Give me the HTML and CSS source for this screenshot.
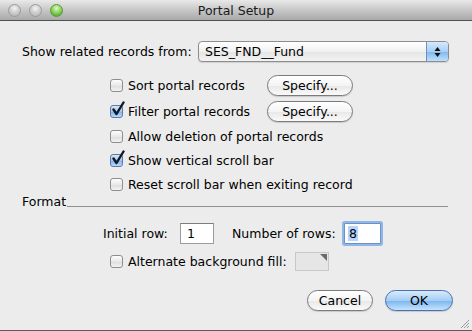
FILE: index.html
```html
<!DOCTYPE html>
<html lang="en">
<head>
    <meta charset="UTF-8">
    <meta name="viewport" content="width=device-width, initial-scale=1.0">
    <title>Portal Setup</title>
    <link rel="stylesheet" href="styles.css">
</head>
<body>
    <div class="window">
        <div class="titlebar">
            <div class="lights">
                <span class="light"></span>
                <span class="light"></span>
                <span class="light green"></span>
            </div>
            <div class="title">Portal Setup</div>
        </div>

        <div class="content">
            <div class="from-row">
                <span class="from-label">Show related records from:</span>
                <div class="select">
                    <span class="select-text">SES_FND__Fund</span>
                    <span class="stepper">
                        <svg width="7" height="12" viewBox="0 0 7 12">
                            <path d="M3.5 1 L6.5 5 L0.5 5 Z" fill="#111"/>
                            <path d="M3.5 11 L6.5 7 L0.5 7 Z" fill="#111"/>
                        </svg>
                    </span>
                </div>
            </div>

            <div class="options">
                <div class="check-row tall">
                    <span class="checkbox"></span>
                    <span class="check-label w-sort">Sort portal records</span>
                    <button type="button" class="pill">Specify...</button>
                </div>
                <div class="check-row tall">
                    <span class="checkbox checked">
                        <svg width="14" height="16" viewBox="0 0 14 16"><path d="M2.5 8.5 L5.5 13 L12.5 1.5" fill="none" stroke="#141824" stroke-width="2.4" stroke-linecap="round" stroke-linejoin="round"/></svg>
                    </span>
                    <span class="check-label w-sort">Filter portal records</span>
                    <button type="button" class="pill">Specify...</button>
                </div>
                <div class="check-row">
                    <span class="checkbox"></span>
                    <span class="check-label">Allow deletion of portal records</span>
                </div>
                <div class="check-row">
                    <span class="checkbox checked">
                        <svg width="14" height="16" viewBox="0 0 14 16"><path d="M2.5 8.5 L5.5 13 L12.5 1.5" fill="none" stroke="#141824" stroke-width="2.4" stroke-linecap="round" stroke-linejoin="round"/></svg>
                    </span>
                    <span class="check-label">Show vertical scroll bar</span>
                </div>
                <div class="check-row">
                    <span class="checkbox"></span>
                    <span class="check-label">Reset scroll bar when exiting record</span>
                </div>
            </div>

            <div class="format-row">
                <span class="format-label">Format</span>
                <span class="format-line"></span>
            </div>

            <div class="rows-row">
                <span class="field-label initial">Initial row:</span>
                <span class="field small">1</span>
                <span class="field-label number">Number of rows:</span>
                <span class="field focused"><span class="sel">8</span></span>
            </div>

            <div class="alt-row">
                <span class="checkbox"></span>
                <span class="check-label alt">Alternate background fill:</span>
                <span class="well"></span>
            </div>

            <div class="buttons">
                <button type="button" class="pill cancel">Cancel</button>
                <button type="button" class="pill ok">OK</button>
            </div>
        </div>

        <svg class="grip" width="11" height="11" viewBox="0 0 11 11">
            <path d="M10 2 L2 10 M10 5 L5 10 M10 8 L8 10" stroke="#9a9a9a" stroke-width="1"/>
        </svg>
    </div>
</body>
</html>
```

FILE: styles.css
```css
body {
    margin: 0;
    background: #ececec;
    font-family: "DejaVu Sans", Verdana, sans-serif;
    font-size: 12.5px;
    color: #000;
}
.window {
    position: relative;
    width: 472px;
    height: 331px;
    box-sizing: border-box;
    background: #ececec;
    border-bottom: 1px solid #5a5a5a;
    display: flex;
    flex-direction: column;
}
.titlebar {
    height: 20px;
    flex-shrink: 0;
    background: linear-gradient(#e9e9e9, #c4c4c4 55%, #a9a9a9);
    border-bottom: 1px solid #515151;
    display: flex;
    align-items: center;
    position: relative;
}
.lights {
    display: flex;
    gap: 8px;
    padding-left: 8px;
    padding-top: 1px;
}
.light {
    width: 13px;
    height: 13px;
    box-sizing: border-box;
    border-radius: 50%;
    border: 1px solid #9b9b9b;
    background: radial-gradient(circle at 50% 30%, #f4f4f4, #d0d0d0 45%, #b4b4b4 90%);
}
.light.green {
    border-color: #5a9a3a;
    background: radial-gradient(circle at 50% 30%, #e2f7c9, #8fd562 45%, #4ea22a 90%);
}
.title {
    position: absolute;
    left: 0;
    right: 0;
    text-align: center;
    color: #1a1a1a;
    font-size: 12.5px;
}
.content {
    display: flex;
    flex-direction: column;
}
.from-row {
    display: flex;
    align-items: center;
    margin-top: 20px;
    padding-left: 22px;
    height: 21px;
}
.from-label {
    width: 176px;
}
.select {
    width: 251px;
    height: 21px;
    box-sizing: border-box;
    border: 1px solid #8d8d8d;
    border-radius: 4px;
    background: linear-gradient(#ffffff, #f1f1f1 50%, #e4e4e4 51%, #f3f3f3);
    display: flex;
    align-items: center;
    overflow: hidden;
    box-shadow: 0 1px 1px rgba(0,0,0,0.12);
}
.select-text {
    flex: 1;
    padding-left: 6px;
}
.stepper {
    width: 21px;
    height: 100%;
    border-left: 1px solid #6c8fc4;
    background: linear-gradient(#d7e9fb, #a9cff4 50%, #7db7ee 51%, #bfe0fb);
    display: flex;
    align-items: center;
    justify-content: center;
}
.options {
    display: flex;
    flex-direction: column;
    margin-top: 10px;
    padding-left: 110px;
}
.check-row {
    display: flex;
    align-items: center;
    height: 24px;
}
.check-row.tall {
    height: 26px;
}
.checkbox {
    position: relative;
    width: 13px;
    height: 13px;
    box-sizing: border-box;
    border: 1px solid #8e8e8e;
    border-radius: 3px;
    background: linear-gradient(#fdfdfd, #e9e9e9 50%, #dcdcdc 51%, #f4f4f4);
    flex-shrink: 0;
}
.checkbox.checked {
    border-color: #5b7aa8;
    background: linear-gradient(#d6e8fa, #9ec9f1 50%, #79b2ea 51%, #b8dcf9);
}
.checkbox svg {
    position: absolute;
    left: 0;
    top: -5px;
}
.check-label {
    margin-left: 5px;
}
.w-sort {
    width: 139px;
}
.pill {
    font-family: inherit;
    font-size: 12.5px;
    color: #000;
    height: 21px;
    padding: 0;
    border: 1px solid #7b7b7b;
    border-radius: 11px;
    background: linear-gradient(#ffffff, #f4f4f4 50%, #e7e7e7 51%, #fafafa);
    box-shadow: 0 1px 1px rgba(0,0,0,0.15);
    width: 86px;
}
.format-row {
    display: flex;
    align-items: flex-end;
    margin-top: -1px;
    padding-left: 22px;
    padding-right: 24px;
    height: 14px;
}
.format-line {
    flex: 1;
    height: 1px;
    background: #8f8f8f;
    margin-bottom: 2px;
    margin-left: 1px;
}
.rows-row {
    display: flex;
    align-items: center;
    margin-top: 14px;
    padding-left: 103px;
    height: 21px;
}
.field-label.initial {
    width: 77px;
}
.field-label.number {
    width: 112px;
    margin-left: 18px;
}
.field {
    height: 21px;
    box-sizing: border-box;
    border: 1px solid #9b9b9b;
    border-top-color: #7d7d7d;
    background: #fff;
    display: flex;
    align-items: center;
    padding-left: 6px;
}
.field.small {
    width: 34px;
}
.field.focused {
    width: 37px;
    padding-left: 3px;
    border-color: #6d90c6;
    box-shadow: 0 0 0 2px #8fb6e8;
    border-radius: 1px;
}
.sel {
    background: #b5d5fd;
    padding: 0 1px;
}
.alt-row {
    display: flex;
    align-items: center;
    margin-top: 8px;
    padding-left: 110px;
    height: 19px;
}
.check-label.alt {
    width: 167px;
}
.well {
    position: relative;
    width: 34px;
    height: 19px;
    box-sizing: border-box;
    border: 1px solid #c8c8c8;
    background: #e6e6e6;
}
.well::after {
    content: "";
    position: absolute;
    right: 1px;
    top: 1px;
    border-top: 7px solid #6a6a6a;
    border-left: 7px solid transparent;
}
.buttons {
    display: flex;
    justify-content: flex-end;
    gap: 12px;
    margin-top: 19px;
    padding-right: 19px;
}
.pill.cancel {
    width: 66px;
}
.pill.ok {
    width: 68px;
    border-color: #4a70b0;
    background: linear-gradient(#d9ebfc, #a4cdf4 50%, #7ab5ee 51%, #c3e3fd);
}
.grip {
    position: absolute;
    right: 2px;
    bottom: 1px;
}
```
